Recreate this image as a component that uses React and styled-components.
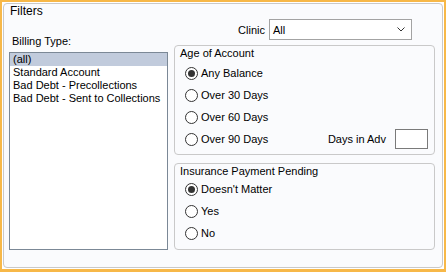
import React from 'react'
import styled, { createGlobalStyle } from 'styled-components'

const Global = createGlobalStyle`
body {
margin: 0;
background: #ffffff;
font-family: "Liberation Sans", Arial, sans-serif;
font-size: 11px;
color: #000;
}
`
const Frame = styled.div`
width: 446px;
height: 272px;
box-sizing: border-box;
border: 2px solid #f7b848;
border-width: 2px 2px 3px 2px;
padding: 1px;
background: #ffffff;
`
const Group = styled.div`
height: 100%;
box-sizing: border-box;
border: 1px solid #c9c9c9;
border-radius: 4px;
background: #fafbfd;
display: flex;
flex-direction: column;
`
const Title = styled.div`
line-height: 15px;
height: 15px;
padding-left: 6px;
font-size: 12px;
`
const Body = styled.div`
display: flex;
gap: 6px;
padding: 0 7px 0 5px;
`
const LeftCol = styled.div`
width: 159px;
display: flex;
flex-direction: column;
`
const Label = styled.div`
line-height: 15px;
margin: 15px 0 3px 3px;
`
const ListBox = styled.div`
height: 198px;
box-sizing: border-box;
border: 1px solid #7b8896;
background: #fff;
`
const Item = styled.div`
height: 13px;
line-height: 13px;
padding-left: 3px;
white-space: nowrap;
background: ${p => (p.$selected ? '#c1cbdc' : 'transparent')};
`
const RightCol = styled.div`
width: 261px;
display: flex;
flex-direction: column;
`
const ClinicRow = styled.div`
height: 21px;
display: flex;
align-items: center;
justify-content: flex-end;
gap: 4px;
padding-right: 23px;
margin-bottom: 5px;
`
const Combo = styled.div`
width: 143px;
height: 21px;
box-sizing: border-box;
border: 1px solid #a3a3a3;
background: #fff;
display: flex;
align-items: center;
justify-content: space-between;
padding: 0 6px 0 3px;
`
const Box = styled.div`
height: ${p => p.$h}px;
box-sizing: border-box;
border: 1px solid #c9c9c9;
border-radius: 4px;
background: #fafbfd;
margin-bottom: ${p => p.$mb || 0}px;
`
const BoxTitle = styled.div`
line-height: 15px;
height: 15px;
padding-left: 5px;
`
const Options = styled.div`
margin-top: ${p => p.$top}px;
padding: 0 6px 0 10px;
`
const Row = styled.div`
height: 22px;
display: flex;
align-items: center;
gap: 3px;
`
const Radio = styled.span`
width: 13px;
height: 13px;
box-sizing: border-box;
border: 1px solid #333;
border-radius: 50%;
background: #fff;
display: inline-flex;
align-items: center;
justify-content: center;
flex: none;
&::after {
content: '';
width: 7px;
height: 7px;
border-radius: 50%;
background: ${p => (p.$checked ? '#333' : 'transparent')};
}
`
const Spacer = styled.div`
flex: 1;
`
const SmallInput = styled.div`
width: 33px;
height: 20px;
box-sizing: border-box;
border: 1px solid #7a7a7a;
background: #fff;
margin-left: 6px;
`

const billing = ['(all)', 'Standard Account', 'Bad Debt - Precollections', 'Bad Debt - Sent to Collections']

function Option({ label, checked, children }) {
    return (
        <Row>
            <Radio $checked={checked} />
            <span>{label}</span>
            {children}
        </Row>
    )
}

export default function App() {
    return (
        <>
            <Global />
            <Frame>
                <Group>
                    <Title>Filters</Title>
                    <Body>
                        <LeftCol>
                            <Label>Billing Type:</Label>
                            <ListBox>
                                {billing.map((b, i) => (
                                    <Item key={b} $selected={i === 0}>{b}</Item>
                                ))}
                            </ListBox>
                        </LeftCol>
                        <RightCol>
                            <ClinicRow>
                                <span>Clinic</span>
                                <Combo>
                                    <span>All</span>
                                    <svg width="8" height="5" viewBox="0 0 8 5">
                                        <polyline points="0.5,0.5 4,4 7.5,0.5" fill="none" stroke="#333" strokeWidth="1" />
                                    </svg>
                                </Combo>
                            </ClinicRow>
                            <Box $h={110} $mb={8}>
                                <BoxTitle>Age of Account</BoxTitle>
                                <Options $top={1}>
                                    <Option label="Any Balance" checked />
                                    <Option label="Over 30 Days" />
                                    <Option label="Over 60 Days" />
                                    <Option label="Over 90 Days">
                                        <Spacer />
                                        <span>Days in Adv</span>
                                        <SmallInput />
                                    </Option>
                                </Options>
                            </Box>
                            <Box $h={87}>
                                <BoxTitle>Insurance Payment Pending</BoxTitle>
                                <Options $top={-1}>
                                    <Option label="Doesn't Matter" checked />
                                    <Option label="Yes" />
                                    <Option label="No" />
                                </Options>
                            </Box>
                        </RightCol>
                    </Body>
                </Group>
            </Frame>
        </>
    )
}
